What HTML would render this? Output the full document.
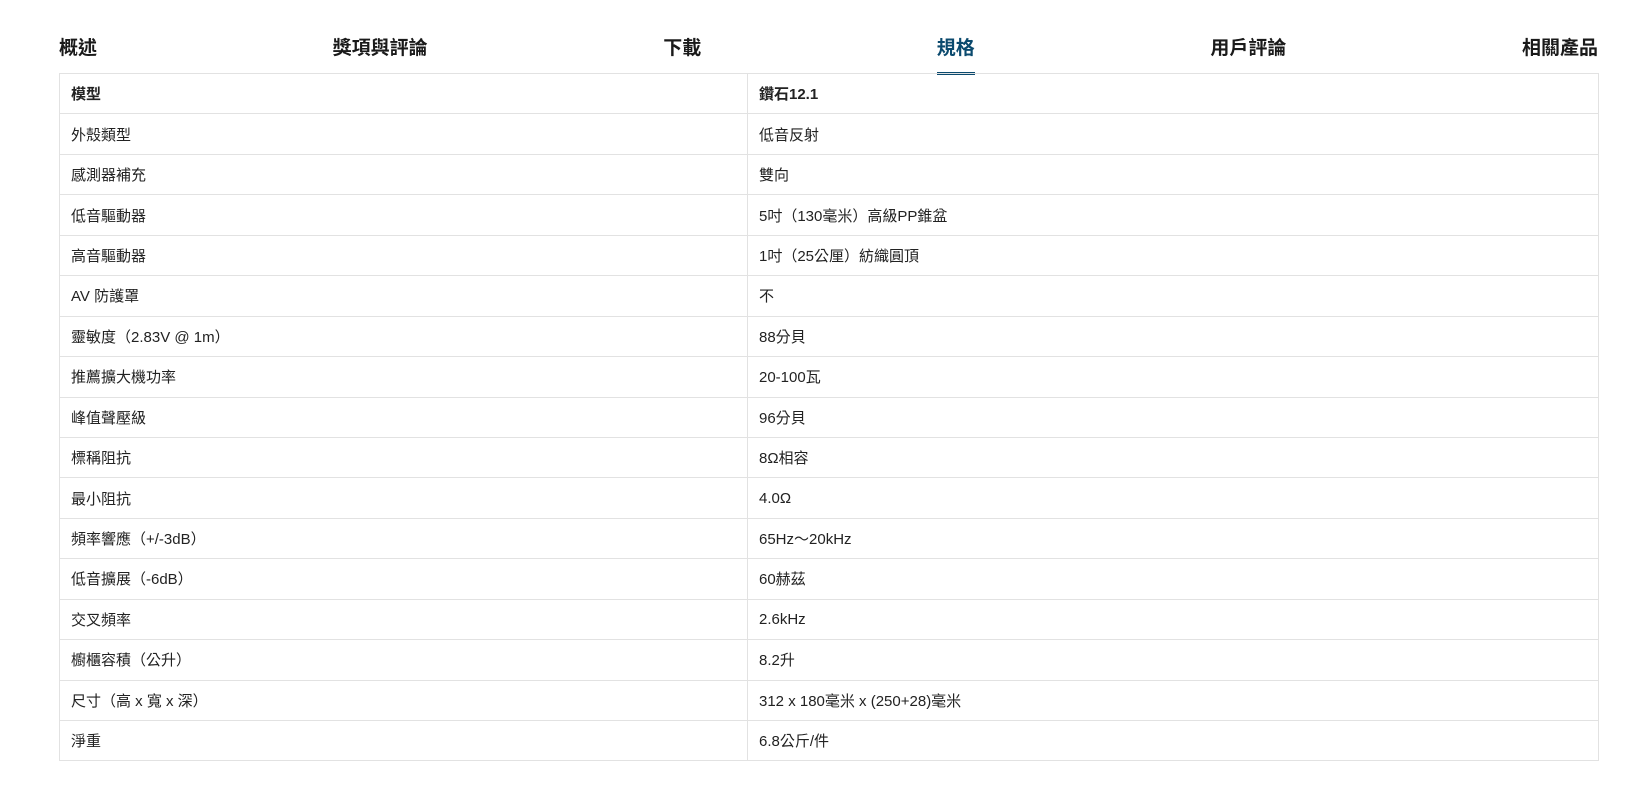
<!DOCTYPE html>
<html><head><meta charset="utf-8"><style>
body{margin:0;background:#fff;font-family:"Liberation Sans","Noto Sans CJK TC",sans-serif;color:#222;}
.nav{position:absolute;left:59px;top:35px;width:1539px;height:39px;display:flex;justify-content:space-between;}
.nav div{font-size:19px;font-weight:bold;color:#1a1a1a;line-height:28px;position:relative;height:39px;}
.nav .act{color:#0b4a6e;}
.nav .act:after{content:"";position:absolute;left:0;right:0;bottom:-1px;height:3px;background:#0b4a6e;}
table{position:absolute;left:59px;top:73px;width:1540px;border-collapse:collapse;}
td{border:1px solid #e2e2e2;height:40.45px;padding:0 0 0 11px;font-size:15px;box-sizing:border-box;}
td:first-child{width:688px;}
tr:first-child td{font-weight:bold;}
</style></head><body>
<div class="nav"><div>概述</div><div>獎項與評論</div><div>下載</div><div class="act">規格</div><div>用戶評論</div><div>相關產品</div></div>
<table>
<tr><td>模型</td><td>鑽石12.1</td></tr>
<tr><td>外殼類型</td><td>低音反射</td></tr>
<tr><td>感測器補充</td><td>雙向</td></tr>
<tr><td>低音驅動器</td><td>5吋（130毫米）高級PP錐盆</td></tr>
<tr><td>高音驅動器</td><td>1吋（25公厘）紡織圓頂</td></tr>
<tr><td>AV 防護罩</td><td>不</td></tr>
<tr><td>靈敏度（2.83V @ 1m）</td><td>88分貝</td></tr>
<tr><td>推薦擴大機功率</td><td>20-100瓦</td></tr>
<tr><td>峰值聲壓級</td><td>96分貝</td></tr>
<tr><td>標稱阻抗</td><td>8Ω相容</td></tr>
<tr><td>最小阻抗</td><td>4.0Ω</td></tr>
<tr><td>頻率響應（+/-3dB）</td><td>65Hz〜20kHz</td></tr>
<tr><td>低音擴展（-6dB）</td><td>60赫茲</td></tr>
<tr><td>交叉頻率</td><td>2.6kHz</td></tr>
<tr><td>櫥櫃容積（公升）</td><td>8.2升</td></tr>
<tr><td>尺寸（高 x 寬 x 深）</td><td>312 x 180毫米 x (250+28)毫米</td></tr>
<tr><td>淨重</td><td>6.8公斤/件</td></tr>
</table>
</body></html>
